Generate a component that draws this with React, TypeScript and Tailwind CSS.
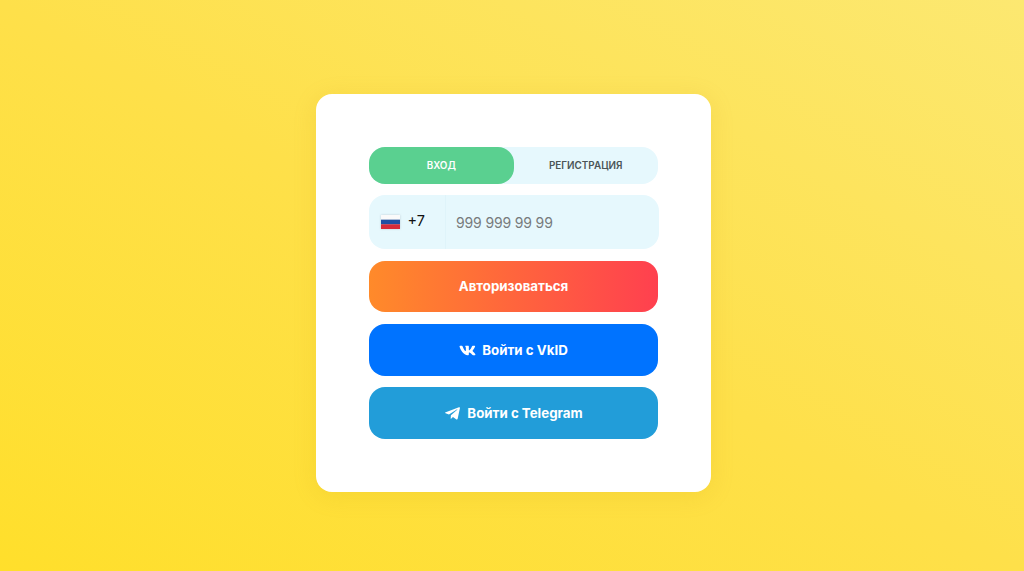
import { FaTelegramPlane, FaVk } from "react-icons/fa";

function Flag() {
  return (
    <svg width="19" height="14" viewBox="0 0 19 14" className="shrink-0 drop-shadow-[0_0_1px_rgba(120,130,140,0.35)]">
      <rect width="19" height="4.7" fill="#fafafa" />
      <rect y="4.7" width="19" height="4.6" fill="#1f4fa3" />
      <rect y="9.3" width="19" height="4.7" fill="#d52b3a" />
    </svg>
  );
}

export default function App() {
  return (
    <div className="flex h-[571px] w-full items-start justify-center overflow-hidden bg-[linear-gradient(29deg,#ffdf2b_0%,#fee04a_50%,#fce871_100%)] pt-[94px] font-['Inter',sans-serif]">
      <div className="ml-[3px] flex h-[398px] w-[395px] flex-col rounded-[16px] bg-white pt-[53px] pl-[53px] shadow-[0_4px_24px_rgba(190,150,0,0.14)]">
        <div className="flex h-[37px] w-[289px] rounded-[16px] bg-[#e6f8fd] text-[9.9px] font-semibold">
          <div className="flex w-[144.5px] items-center justify-center rounded-[16px] bg-[#5ad090] text-white">ВХОД</div>
          <div className="flex flex-1 items-center justify-center text-[#4b5557]">РЕГИСТРАЦИЯ</div>
        </div>

        <div className="mt-[11px] flex h-[54px] w-[290px] items-center rounded-[16px] bg-[#e6f8fd]">
          <div className="flex h-full w-[77px] items-center border-r border-[#dff4fa] pl-[12px]">
            <Flag />
            <span className="ml-[7.5px] -translate-y-[1px] text-[14.5px] text-[#111]">+7</span>
          </div>
          <span className="ml-[10px] text-[14px] tracking-[-0.15px] text-[#777b7c]">999 999 99 99</span>
        </div>

        <button className="mt-[12px] flex h-[51px] w-[289px] items-center justify-center rounded-[16px] bg-[linear-gradient(90deg,#ff8a2a,#ff404f)] text-[13.3px] font-bold text-white">
          Авторизоваться
        </button>
        <button className="mt-[12px] flex h-[51.5px] w-[289px] items-center justify-center gap-[6px] rounded-[16px] bg-[#0073ff] pt-[2px] text-[13.3px] font-bold text-white">
          <FaVk className="text-[17px]" />
          Войти с VkID
        </button>
        <button className="mt-[11.5px] flex h-[51.5px] w-[289px] items-center justify-center gap-[6px] rounded-[16px] bg-[#229dd9] pt-[2px] text-[13.3px] font-bold text-white">
          <FaTelegramPlane className="text-[17px]" />
          Войти с Telegram
        </button>
      </div>
    </div>
  );
}
